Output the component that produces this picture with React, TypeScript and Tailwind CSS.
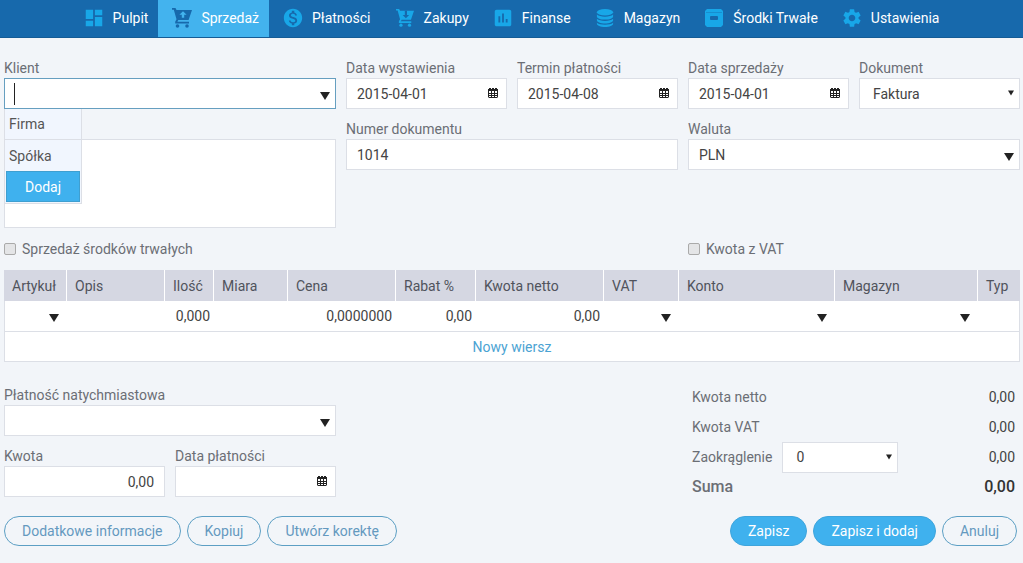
import { useState, type ReactNode } from "react";
import { MdAssessment, MdDashboard, MdMonetizationOn, MdSettings } from "react-icons/md";
import clsx from "clsx";

const CartIcon = ({ up = false }: { up?: boolean }) => (
    <svg viewBox="0 0 20 20" className={up ? "w-5 h-5 -m-px" : "w-[18px] h-[18px]"} aria-hidden="true">
        <path d="M0 0h3.5l1 2H20l-3.4 10H6.3l-.9 1.7H17v1.8H3.2v-1.8l1.3-2.4L1.8 1.8H0z" fill="currentColor" />
        <circle cx="5.5" cy="18" r="1.8" fill="currentColor" />
        <circle cx="15" cy="18" r="1.8" fill="currentColor" />
        <path
            d={up ? "M11 3.2l3.6 3.6h-2.4v3H9.8v-3H7.4z" : "M11 10.2l3.6-3.6h-2.4V2H9.8v4.6H7.4z"}
            className={up ? "fill-[#43b3ee]" : "fill-[#1769ac]"}
        />
    </svg>
);

const StackIcon = () => (
    <svg viewBox="0 0 20 20" className="w-[18px] h-[18px]" fill="currentColor" aria-hidden="true">
        <ellipse cx="10" cy="3.6" rx="9" ry="3.6" />
        <path d="M1 6.2c1.7 1.6 5 2.4 9 2.4s7.3-.8 9-2.4v2c0 2-4 3.6-9 3.6s-9-1.6-9-3.6z" />
        <path d="M1 10.8c1.7 1.6 5 2.4 9 2.4s7.3-.8 9-2.4v1.6c0 2-4 3.6-9 3.6s-9-1.6-9-3.6z" />
        <path d="M1 15.2c1.7 1.5 5 2.2 9 2.2s7.3-.7 9-2.2v1.2c0 2-4 3.6-9 3.6s-9-1.6-9-3.6z" />
    </svg>
);

const DrawerIcon = () => (
    <svg viewBox="0 0 18 18" className="w-[18px] h-[18px]" aria-hidden="true">
        <path d="M2 0h14l2 2v14l-2 2H2l-2-2V2z" fill="currentColor" />
        <path d="M1 3.5h16" className="stroke-[#1769ac]" strokeWidth="1" opacity=".4" />
        <rect x="5" y="7" width="8" height="4" rx="1" className="fill-[#1769ac]" />
    </svg>
);

const CalendarIcon = () => (
    <svg viewBox="0 0 10 10" className="w-[10px] h-[10px] text-[#222]" aria-hidden="true">
        <path d="M0 1h10v8l-1 1H1L0 9zM1 0h2v1H1zM4 0h2v1H4zM7 0h2v1H7z" fill="currentColor" />
        <path
            d="M1 3h2v2H1zM4 3h2v2H4zM7 3h2v2H7zM1 6h2v1H1zM4 6h2v1H4zM7 6h2v1H7zM1 8h2v1H1zM4 8h2v1H4zM7 8h2v1H7z"
            fill="#fff"
        />
    </svg>
);

const Arrow = ({ small = false }: { small?: boolean }) => (
    <svg viewBox="0 0 10 8" className={clsx("text-[#222]", small ? "w-[6px] h-[6px]" : "w-[10px] h-2")} aria-hidden="true">
        <path d="M0 0h10L5 8z" fill="currentColor" />
    </svg>
);

// Material glyphs keep some empty space around the drawing
const glyph = "w-[22px] h-[22px] -m-0.5";

const navItems: { label: string; icon: ReactNode; active?: boolean }[] = [
    { label: "Pulpit", icon: <MdDashboard className={glyph} /> },
    { label: "Sprzedaż", icon: <CartIcon up />, active: true },
    { label: "Płatności", icon: <MdMonetizationOn className={glyph} /> },
    { label: "Zakupy", icon: <CartIcon /> },
    { label: "Finanse", icon: <MdAssessment className={glyph} /> },
    { label: "Magazyn", icon: <StackIcon /> },
    { label: "Środki Trwałe", icon: <DrawerIcon /> },
    { label: "Ustawienia", icon: <MdSettings className={glyph} /> },
];

const columns = [
    { label: "Artykuł", width: "w-[63px]", picker: true },
    { label: "Opis", width: "w-[98px]" },
    { label: "Ilość", width: "w-[49px]", value: "0,000" },
    { label: "Miara", width: "w-[74px]" },
    { label: "Cena", width: "w-[108px]", value: "0,0000000" },
    { label: "Rabat %", width: "w-[80px]", value: "0,00" },
    { label: "Kwota netto", width: "w-[128px]", value: "0,00" },
    { label: "VAT", width: "w-[75px]", picker: true },
    { label: "Konto", width: "w-[156px]", picker: true },
    { label: "Magazyn", width: "w-[143px]", picker: true },
    { label: "Typ", width: "w-[42px]" },
];

const box = "block w-full h-[31px] bg-white border px-[10px] text-[#444] outline-none";

interface FieldProps {
    id: string;
    label: string;
    value?: string;
    kind?: "text" | "date" | "combo";
    align?: "left" | "right";
    className?: string;
    focused?: boolean;
    children?: ReactNode;
}

function Field({ id, label, value = "", kind = "text", align = "left", className, focused, children }: FieldProps) {
    return (
        <div className={className}>
            <label htmlFor={id} className="block h-[18px] leading-4">{label}</label>
            <div className="relative">
                <input
                    id={id}
                    defaultValue={value}
                    autoComplete="off"
                    className={clsx(box, align === "right" && "text-right", focused ? "border-[#669fc0]" : "border-[#dcdfe6]")}
                />
                {kind === "date" && <span className="absolute right-[9px] top-[10px]"><CalendarIcon /></span>}
                {kind === "combo" && <span className="absolute right-[6px] top-[14px]"><Arrow /></span>}
                {children}
            </div>
        </div>
    );
}

function Select({ id, options }: { id: string; options: string[] }) {
    return (
        <div className="relative">
            <select id={id} className={clsx(box, "appearance-none pl-[13px] border-[#dcdfe6]")}>
                {options.map((option) => <option key={option}>{option}</option>)}
            </select>
            <span className="absolute right-[6px] top-3 pointer-events-none"><Arrow small /></span>
        </div>
    );
}

function PillButton({ children, filled }: { children: ReactNode; filled?: boolean }) {
    return (
        <button
            type="button"
            className={clsx(
                "h-[30px] px-[17px] rounded-full border",
                filled ? "bg-[#3fb1ee] border-[#3fa5dc] text-white" : "border-[#5c9fc4] text-[#6499bf]"
            )}
        >
            {children}
        </button>
    );
}

export default function App() {
    const [fixedAssets, setFixedAssets] = useState(false);
    const [withVat, setWithVat] = useState(false);
    const checkbox = "appearance-none w-3 h-3 rounded-xs border border-[#aaa] bg-[#e4e5e7] checked:bg-[#3fb1ee]";

    return (
        <div className="min-h-screen bg-[#f2f5f9] font-['Roboto',sans-serif] text-sm text-[#6b6e75]">
            <nav className="flex justify-center h-[38px] pr-1 bg-[#1769ac] border-b border-[#155c96]">
                {navItems.map((item) => (
                    <a
                        key={item.label}
                        href="#"
                        className={clsx(
                            "flex items-center gap-[10px] pl-[15px] pr-[10px] pb-px text-white",
                            item.active && "bg-[#43b3ee]"
                        )}
                    >
                        <span className={item.active ? "text-[#1769ac]" : "text-[#18a7e8]"}>{item.icon}</span>
                        {item.label}
                    </a>
                ))}
            </nav>

            <main className="pl-1 pr-[3px]">
                {/* Document details */}
                <div className="grid grid-cols-3 gap-x-[10px] pt-[22px]">
                    <div>
                        <Field id="client" label="Klient" kind="combo" focused>
                            <span className="absolute left-[10px] top-[5px] w-px h-[22px] bg-[#222]" />
                            <div className="absolute left-0 top-[31px] z-10 w-[78px] bg-[#f1f6fe] border border-t-0 border-[#dcdfe6] text-[#555]">
                                <button type="button" className="block w-full h-[31px] px-1 text-left border-b border-[#dcdfe6]">Firma</button>
                                <button type="button" className="block w-full h-[31px] px-1 text-left">Spółka</button>
                                <div className="px-px pb-px">
                                    <button type="button" className="block w-full h-[31px] bg-[#3fb1ee] border border-[#3f9fd0] text-white">
                                        Dodaj
                                    </button>
                                </div>
                            </div>
                        </Field>
                        <textarea aria-label="Adres klienta" className="block w-full h-[89px] mt-[30px] resize-none bg-white border border-[#dcdfe6] outline-none" />
                    </div>
                    <div className="grid grid-cols-2 gap-x-[10px] gap-y-3 content-start">
                        <Field id="issued" label="Data wystawienia" value="2015-04-01" kind="date" />
                        <Field id="due" label="Termin płatności" value="2015-04-08" kind="date" />
                        <Field id="number" label="Numer dokumentu" value="1014" className="col-span-2" />
                    </div>
                    <div className="grid grid-cols-2 gap-x-[10px] gap-y-3 content-start">
                        <Field id="sold" label="Data sprzedaży" value="2015-04-01" kind="date" />
                        <div>
                            <label htmlFor="document" className="block h-[18px] leading-4">Dokument</label>
                            <Select id="document" options={["Faktura"]} />
                        </div>
                        <Field id="currency" label="Waluta" value="PLN" kind="combo" className="col-span-2" />
                    </div>
                </div>

                <div className="grid grid-cols-3 gap-x-[10px] mt-[10px] h-8 items-start">
                    <label className="col-span-2 flex items-center gap-[6px] h-[22px]">
                        <input type="checkbox" className={checkbox} checked={fixedAssets} onChange={(e) => setFixedAssets(e.target.checked)} />
                        Sprzedaż środków trwałych
                    </label>
                    <label className="flex items-center gap-[6px] h-[22px]">
                        <input type="checkbox" className={checkbox} checked={withVat} onChange={(e) => setWithVat(e.target.checked)} />
                        Kwota z VAT
                    </label>
                </div>

                {/* Line items */}
                <table className="w-full table-fixed border-separate border-spacing-0 bg-white text-[#444]">
                    <thead>
                        <tr className="h-[31px] bg-[#d5d7e2] text-[#50535c]">
                            {columns.map((col) => (
                                <th key={col.label} className={clsx("pl-2 text-left font-normal whitespace-nowrap border-r border-white last:border-r-0", col.width)}>
                                    {col.label}
                                </th>
                            ))}
                        </tr>
                    </thead>
                    <tbody>
                        <tr>
                            {columns.map((col) => (
                                <td key={col.label} className="relative h-[31px] border-b border-[#dcdfe6] first:border-l last:border-r">
                                    <input aria-label={col.label} defaultValue={col.value} className="block w-full pr-1 text-right outline-none" />
                                    {col.picker && <span className="absolute right-2 top-[13px]"><Arrow /></span>}
                                </td>
                            ))}
                        </tr>
                        <tr>
                            <td colSpan={columns.length} className="h-[30px] text-center border border-t-0 border-[#dcdfe6]">
                                <button type="button" className="text-[#4ba3d3]">Nowy wiersz</button>
                            </td>
                        </tr>
                    </tbody>
                </table>

                {/* Payment and totals */}
                <div className="grid grid-cols-3 gap-x-[10px] pt-5">
                    <div className="grid grid-cols-2 gap-x-[10px] gap-y-3 pt-[5px] content-start">
                        <Field id="payment" label="Płatność natychmiastowa" kind="combo" className="col-span-2" />
                        <Field id="amount" label="Kwota" value="0,00" align="right" />
                        <Field id="paid" label="Data płatności" kind="date" />
                    </div>
                    <dl className="col-start-3 pl-1 pr-[5px]">
                        <div className="flex items-center justify-between h-[30px]">
                            <dt>Kwota netto</dt>
                            <dd className="text-[#444]">0,00</dd>
                        </div>
                        <div className="flex items-center justify-between h-[30px]">
                            <dt>Kwota VAT</dt>
                            <dd className="text-[#444]">0,00</dd>
                        </div>
                        <div className="flex items-center justify-between h-[30px]">
                            <dt className="flex items-center gap-[10px]">
                                <label htmlFor="rounding">Zaokrąglenie</label>
                                <div className="w-[116px]"><Select id="rounding" options={["0", "1", "2"]} /></div>
                            </dt>
                            <dd className="text-[#444]">0,00</dd>
                        </div>
                        <div className="flex items-center justify-between h-[30px] text-base font-medium">
                            <dt>Suma</dt>
                            <dd className="text-[#333]">0,00</dd>
                        </div>
                    </dl>
                </div>

                <div className="flex justify-between pt-[14px] pb-4 pr-[3px]">
                    <div className="flex gap-[6px]">
                        <PillButton>Dodatkowe informacje</PillButton>
                        <PillButton>Kopiuj</PillButton>
                        <PillButton>Utwórz korektę</PillButton>
                    </div>
                    <div className="flex gap-[6px]">
                        <PillButton filled>Zapisz</PillButton>
                        <PillButton filled>Zapisz i dodaj</PillButton>
                        <PillButton>Anuluj</PillButton>
                    </div>
                </div>
            </main>
        </div>
    );
}
